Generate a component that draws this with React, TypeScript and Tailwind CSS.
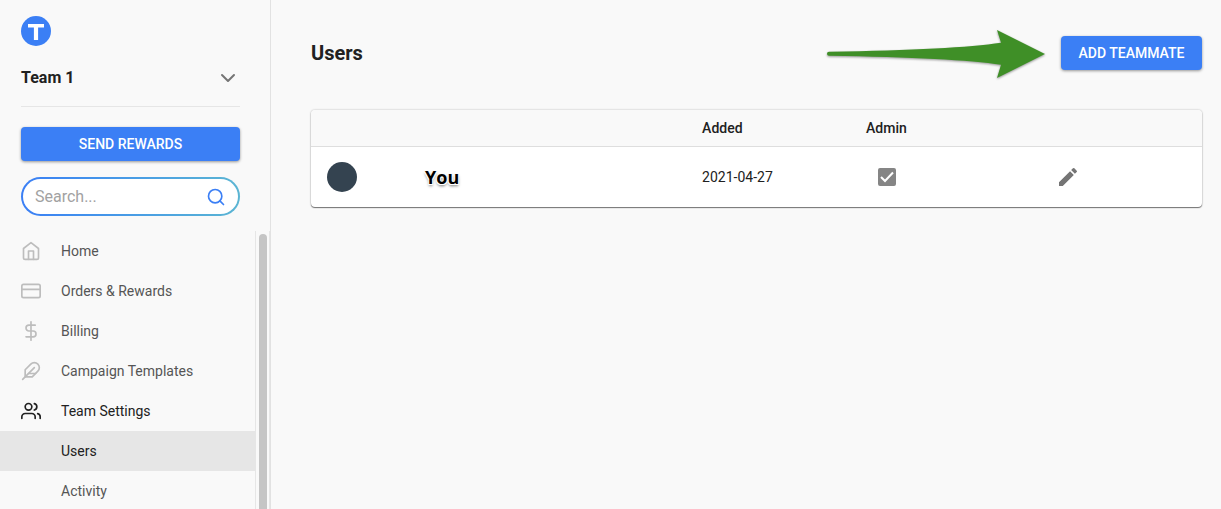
import { useState } from "react";
import { IconType } from "react-icons";
import { FiChevronDown, FiCreditCard, FiDollarSign, FiFeather, FiHome, FiSearch, FiUsers } from "react-icons/fi";
import { MdEdit } from "react-icons/md";

interface NavItemProps {
    label: string,
    icon?: IconType,
    open?: boolean,
    current?: boolean,
}

const navItems: NavItemProps[] = [
    { label: "Home", icon: FiHome },
    { label: "Orders & Rewards", icon: FiCreditCard },
    { label: "Billing", icon: FiDollarSign },
    { label: "Campaign Templates", icon: FiFeather },
    { label: "Team Settings", icon: FiUsers, open: true },
    { label: "Users", current: true },
    { label: "Activity" },
];

function NavItem(props: NavItemProps) {
    const Icon = props.icon;
    const active = props.open || props.current;

    return (
        <li>
            <a
                href="#"
                aria-current={props.current ? "page" : undefined}
                className={`flex h-10 items-center gap-5 pl-[21px] text-sm ${active ? "text-[#212121]" : "text-[#555555]"} ${props.current ? "bg-[#e6e6e6]" : ""}`}
            >
                <span className={`w-5 shrink-0 ${active ? "text-[#212121]" : "text-[#bdbdbd]"}`}>
                    {Icon && <Icon size={20} />}
                </span>
                {props.label}
            </a>
        </li>
    );
}

function Sidebar() {
    const [search, setSearch] = useState("");

    return (
        <aside className="flex h-screen w-[271px] shrink-0 flex-col border-r border-[#e2e2e2]">
            <div className="flex flex-col pt-4 pr-[30px] pl-[21px]">
                <svg width="30" height="30" viewBox="0 0 30 30" role="img" aria-label="Home">
                    <circle cx="15" cy="15" r="15" fill="#3b7ff5" />
                    <path d="M7 8h16v3.600h-5.900V24h-4.200V11.600H7z" fill="#ffffff" />
                </svg>
                <button className="flex h-[61px] items-center justify-between border-b border-[#e6e6e6] pt-[3px] text-base font-bold text-[#212121]">
                    Team 1
                    <FiChevronDown size={24} className="text-[#757575]" />
                </button>
                <button className="mt-5 h-[34px] rounded bg-[#3b7ff5] text-sm font-medium text-white shadow-[0_1px_3px_rgba(0,0,0,0.4)]">
                    SEND REWARDS
                </button>
                <label className="mt-4 flex rounded-full bg-linear-to-r from-[#3b7ff5] to-[#5bb5d3] p-[2px]">
                    <span className="flex h-[35px] w-full items-center rounded-full bg-white pr-3 pl-3">
                        <input
                            type="text"
                            aria-label="Search"
                            placeholder="Search..."
                            value={search}
                            onChange={(e) => setSearch(e.currentTarget.value)}
                            className="min-w-0 flex-1 text-base outline-none placeholder:text-[#a2a2a2]"
                        />
                        <FiSearch size={20} className="text-[#3b7ff5]" />
                    </span>
                </label>
            </div>
            <div className="mt-[15px] flex min-h-0 flex-1">
                <nav className="flex-1 overflow-hidden">
                    <ul>
                        {navItems.map(item => (
                            <NavItem key={item.label} {...item} />
                        ))}
                    </ul>
                </nav>
                {/* scroll track */}
                <div className="flex w-[15px] border-x border-[#e6e6e6] pt-[3px] pl-[3px]">
                    <div className="w-2 rounded-t-full bg-[#c5c5c5]"></div>
                </div>
            </div>
        </aside>
    );
}

function Arrow() {
    return (
        <svg width="226" height="60" viewBox="0 0 226 60" aria-hidden="true" className="drop-shadow-[0_1px_1px_rgba(0,0,0,0.4)]">
            <path
                d="M5 28.800Q3 28.800 3 30.800Q3 32.800 5 32.800Q130 34.800 177 41.800L173 55L221 31L173 7L177 19.800Q130 26.800 5 28.800Z"
                fill="#3f8f27"
            />
        </svg>
    );
}

export default function App() {
    return (
        <div className="flex min-h-screen bg-[#f9f9f9] font-[Roboto,sans-serif] text-[#212121]">
            <Sidebar />
            <main className="min-w-0 flex-1 pt-[23px] pr-[19px] pl-10">
                <header className="flex h-[60px] items-center">
                    <h1 className="flex-1 text-xl font-bold">Users</h1>
                    <Arrow />
                    <button className="ml-[11px] h-[34px] w-[141px] rounded bg-[#3b7ff5] text-sm font-medium text-white shadow-[0_1px_3px_rgba(0,0,0,0.4)]">
                        ADD TEAMMATE
                    </button>
                </header>
                <div className="mt-[27px] overflow-hidden rounded bg-white shadow-[0_1px_1px_rgba(0,0,0,0.5),0_0_2px_rgba(0,0,0,0.3)]">
                    <table className="w-full table-fixed text-left text-sm">
                        <thead>
                            <tr className="h-9 border-b border-[#dedede] bg-[#f9f9f9]">
                                <th className="w-[11%]" aria-label="Avatar"></th>
                                <th className="w-[31.1%]" aria-label="Name"></th>
                                <th className="w-[18.4%] px-4 font-medium">Added</th>
                                <th className="w-[21.3%] px-4 font-medium">Admin</th>
                                <th className="w-[18.2%]" aria-label="Actions"></th>
                            </tr>
                        </thead>
                        <tbody>
                            <tr className="h-[61px]">
                                <td className="px-4">
                                    <div className="size-[30px] rounded-full bg-[#344350]"></div>
                                </td>
                                <td className="px-4 font-['Open_Sans',sans-serif] text-lg font-bold text-black [text-shadow:0_0_1px_#fff,1px_1px_0_#fff,-1px_1px_0_#fff,0_2px_3px_rgba(0,0,0,0.6)]">
                                    You
                                </td>
                                <td className="px-4">2021-04-27</td>
                                <td className="px-4">
                                    <div className="ml-3 grid size-[18px]">
                                        <input
                                            type="checkbox"
                                            aria-label="Admin"
                                            defaultChecked
                                            className="peer col-start-1 row-start-1 size-[18px] appearance-none rounded-xs border-2 border-[#858585] checked:bg-[#858585]"
                                        />
                                        <svg viewBox="0 0 18 18" className="pointer-events-none invisible col-start-1 row-start-1 size-[18px] peer-checked:visible">
                                            <path d="M3 9l4 4 8-8.500" fill="none" stroke="#ffffff" strokeWidth="2" />
                                        </svg>
                                    </div>
                                </td>
                                <td className="px-4">
                                    <button aria-label="Edit user" className="block text-[#757575]">
                                        <MdEdit size={24} />
                                    </button>
                                </td>
                            </tr>
                        </tbody>
                    </table>
                </div>
            </main>
        </div>
    );
}
